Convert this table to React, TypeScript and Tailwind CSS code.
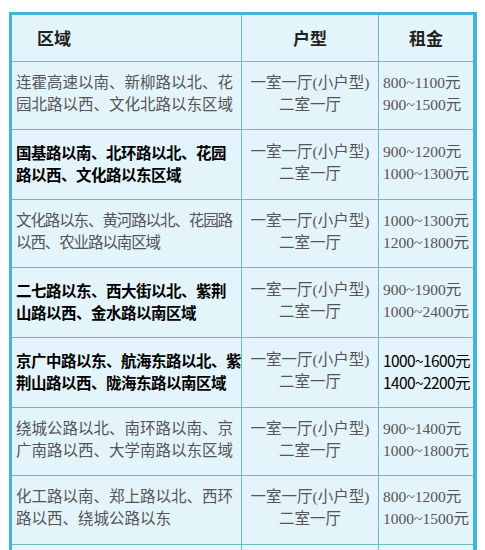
const rows = [
  { area: ['连霍高速以南、新柳路以北、花', '园北路以西、文化北路以东区域'], rent: ['800~1100元', '900~1500元'], h: 'h-[68px]' },
  { area: ['国基路以南、北环路以北、花园', '路以西、文化路以东区域'], rent: ['900~1200元', '1000~1300元'], h: 'h-[70px]', dark: true },
  { area: ['文化路以东、黄河路以北、花园路', '以西、农业路以南区域'], rent: ['1000~1300元', '1200~1800元'], h: 'h-[68px]', tight: true },
  { area: ['二七路以东、西大街以北、紫荆', '山路以西、金水路以南区域'], rent: ['900~1900元', '1000~2400元'], h: 'h-[70px]', dark: true },
  { area: ['京广中路以东、航海东路以北、紫', '荆山路以西、陇海东路以南区域'], rent: ['1000~1600元', '1400~2200元'], h: 'h-[70px]', dark: true, darkRent: true },
  { area: ['绕城公路以北、南环路以南、京', '广南路以西、大学南路以东区域'], rent: ['900~1400元', '1000~1800元'], h: 'h-[68px]' },
  { area: ['化工路以南、郑上路以北、西环', '路以西、绕城公路以东'], rent: ['800~1200元', '1000~1500元'], h: 'h-[69px]' },
];

const serif = "font-['Liberation_Serif','Noto_Sans_CJK_SC',serif]";
const sans = "font-['Noto_Sans_CJK_SC','Liberation_Sans',sans-serif]";

export default function App() {
  return (
    <div className="w-[485px] h-[550px] overflow-hidden bg-white pt-3 pl-[9px]">
      <div className="w-[468px] bg-[#e4f4fb] border-t-[3px] border-l-[3px] border-r-4 border-[#3fb6d9]">
        <div className="grid grid-cols-[230px_137px_1fr]">
          {/* Header */}
          <div className={`h-[47px] flex items-center pl-[25px] border-b-[1.5px] border-r-[1.5px] border-[#6dbcc4] text-[17px] font-bold text-[#222] ${sans}`}>
            区域
          </div>
          <div className={`h-[47px] flex items-center justify-center border-b-[1.5px] border-r-[1.5px] border-[#6dbcc4] text-[17px] font-bold text-[#222] ${sans}`}>
            户型
          </div>
          <div className={`h-[47px] flex items-center justify-center border-b-[1.5px] border-[#6dbcc4] text-[17px] font-bold text-[#222] ${sans}`}>
            租金
          </div>

          {rows.map((r, i) => (
            <div key={i} className="contents">
              <div
                className={`${r.h} flex flex-col justify-center pl-1 pb-1 border-b-[1.5px] border-r-[1.5px] border-[#6dbcc4] text-[15.5px] leading-[22px] whitespace-nowrap overflow-hidden ${
                  r.dark ? `text-black font-bold ${sans} tracking-[-0.5px]` : `text-[#555] ${serif}`
                } ${r.tight ? 'tracking-[-1.1px]' : ''}`}
              >
                <span>{r.area[0]}</span>
                <span>{r.area[1]}</span>
              </div>
              <div
                className={`${r.h} flex flex-col justify-center items-center pb-1 border-b-[1.5px] border-r-[1.5px] border-[#6dbcc4] text-[15.5px] leading-[22px] text-[#555] whitespace-nowrap ${serif}`}
              >
                <span>一室一厅(小户型)</span>
                <span>二室一厅</span>
              </div>
              <div
                className={`${r.h} flex flex-col justify-center pl-1 pb-1 border-b-[1.5px] border-[#6dbcc4] text-[15.5px] leading-[22px] whitespace-nowrap overflow-hidden ${
                  r.darkRent ? `text-black ${sans} text-[14px] tracking-[-0.6px]` : `text-[#555] ${serif}`
                }`}
              >
                <span>{r.rent[0]}</span>
                <span>{r.rent[1]}</span>
              </div>
            </div>
          ))}
          <div className="h-[10px] border-r-[1.5px] border-[#6dbcc4]" />
          <div className="h-[10px] border-r-[1.5px] border-[#6dbcc4]" />
          <div className="h-[10px]" />
        </div>
      </div>
    </div>
  );
}
